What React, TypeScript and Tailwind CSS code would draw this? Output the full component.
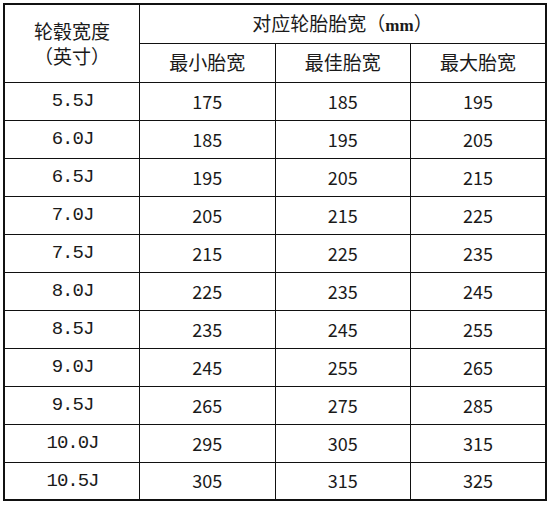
const rows: [string, number, number, number][] = [
  ["5.5J", 175, 185, 195],
  ["6.0J", 185, 195, 205],
  ["6.5J", 195, 205, 215],
  ["7.0J", 205, 215, 225],
  ["7.5J", 215, 225, 235],
  ["8.0J", 225, 235, 245],
  ["8.5J", 235, 245, 255],
  ["9.0J", 245, 255, 265],
  ["9.5J", 265, 275, 285],
  ["10.0J", 295, 305, 315],
  ["10.5J", 305, 315, 325],
];

const cjk = "font-['Noto_Sans_CJK_SC',sans-serif]";

export default function App() {
  return (
    <div className="h-[505px] w-[550px] bg-white pl-[3px] pt-[3px]">
      <table
        className={`h-[498px] w-[544px] table-fixed border-collapse border-2 border-[#111] text-center text-[#1a1a1a] ${cjk}`}
      >
        <thead>
          <tr className="h-[39px]">
            <th
              rowSpan={2}
              className="border border-[#111] text-[19px] font-normal leading-[25px]"
            >
              <div>轮毂宽度</div>
              <div>（英寸）</div>
            </th>
            <th colSpan={3} className="border border-[#111] text-[19px] font-normal">
              对应轮胎胎宽（<span className="font-['Liberation_Serif',serif] text-[17px] font-bold">mm</span>）
            </th>
          </tr>
          <tr className="h-[39px]">
            <th className="border border-[#111] text-[19px] font-normal">最小胎宽</th>
            <th className="border border-[#111] text-[19px] font-normal">最佳胎宽</th>
            <th className="border border-[#111] text-[19px] font-normal">最大胎宽</th>
          </tr>
        </thead>
        <tbody>
          {rows.map(([rim, min, best, max]) => (
            <tr key={rim} className="h-[38px]">
              <td className="border border-[#111] pl-[1px] font-['Liberation_Mono',monospace] text-[19px] tracking-[-1px]">
                {rim}
              </td>
              <td className="border border-[#111] text-[18px]">{min}</td>
              <td className="border border-[#111] text-[18px]">{best}</td>
              <td className="border border-[#111] text-[18px]">{max}</td>
            </tr>
          ))}
        </tbody>
      </table>
    </div>
  );
}
